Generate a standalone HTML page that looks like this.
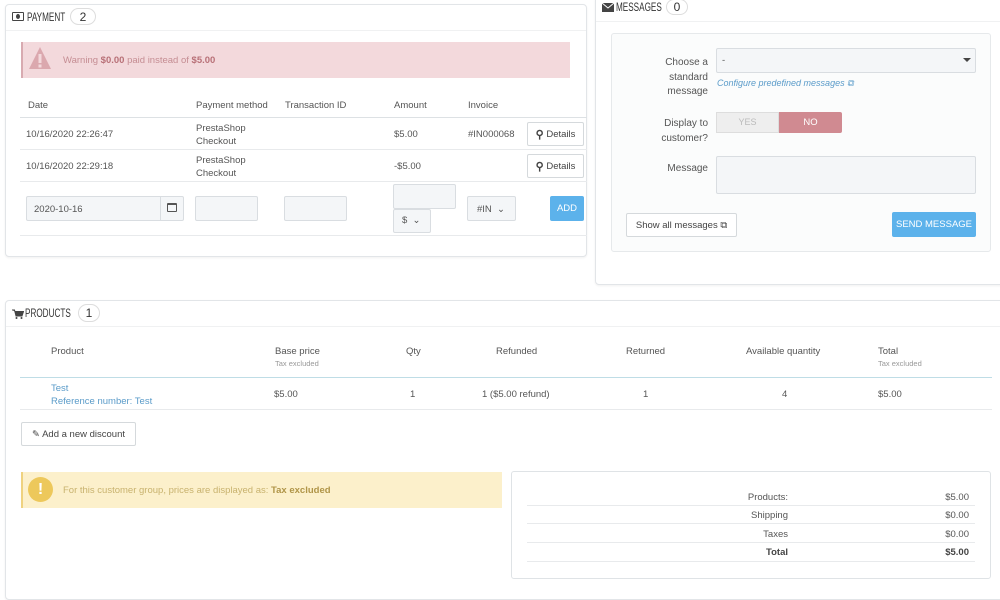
<!DOCTYPE html><html><head><style>
*{box-sizing:border-box;margin:0;padding:0}
body{width:1000px;height:590px;background:#fff;font-family:"Liberation Sans",sans-serif;font-size:9.5px;color:#555;position:relative;overflow:hidden}
.a{position:absolute}
.panel{position:absolute;border:1px solid #e2e5e8;border-radius:4px;background:#fff;box-shadow:0 1px 2px rgba(0,0,0,.06)}
.hd{font-size:12px;color:#333;text-transform:uppercase;transform:scaleX(.68);transform-origin:left;white-space:nowrap}
.badge{position:absolute;border:1px solid #ddd;border-radius:9px;font-size:12px;color:#333;display:flex;align-items:center;justify-content:center}
.line{position:absolute;height:1px;background:#e8eaec}
.inp{position:absolute;background:#f4f6f8;border:1px solid #d9dde1;border-radius:2px}
.btn{position:absolute;border:1px solid #d5d9dc;border-radius:2px;background:#fff;color:#444;font-size:9.5px;display:flex;align-items:center;justify-content:center}
.blue{background:#5cb2eb;color:#fff;border:none}
.r{text-align:right}
</style></head><body>
<!-- PAYMENT -->
<div class="panel" style="left:5px;top:4px;width:582px;height:253px"></div>
<div class="a" style="left:12px;top:12px;width:12px;height:9px;border:1.5px solid #444;border-radius:1px"></div>
<div class="a" style="left:16px;top:14px;width:4px;height:5px;border-radius:50%;background:#444"></div>
<div class="a hd" style="left:27px;top:10px">Payment</div>
<div class="badge" style="left:70px;top:8px;width:26px;height:17px">2</div>
<div class="line" style="left:6px;top:30px;width:580px;background:#f0f1f2"></div>
<div class="a" style="left:21px;top:42px;width:549px;height:36px;background:#f3d9dc;border-left:2px solid #d8aab0"></div>
<svg class="a" style="left:28px;top:44px" width="24" height="28" viewBox="0 0 24 28"><path d="M12 3 L23 25 H1 Z" fill="#dba8ae"/><rect x="10.5" y="10" width="3" height="9" fill="#f3d9dc"/><rect x="10.5" y="20.5" width="3" height="3" fill="#f3d9dc"/></svg>
<div class="a" style="left:63px;top:55px;color:#c58d93">Warning <b style="color:#b87077">$0.00</b> paid instead of <b style="color:#b87077">$5.00</b></div>
<div class="a" style="left:28px;top:100px">Date</div>
<div class="a" style="left:196px;top:100px">Payment method</div>
<div class="a" style="left:285px;top:100px">Transaction ID</div>
<div class="a" style="left:394px;top:100px">Amount</div>
<div class="a" style="left:468px;top:100px">Invoice</div>
<div class="line" style="left:20px;top:117px;width:567px;background:#dde1e4"></div>
<div class="a" style="left:26px;top:129px">10/16/2020 22:26:47</div>
<div class="a" style="left:196px;top:122px;line-height:13px">PrestaShop<br>Checkout</div>
<div class="a" style="left:394px;top:129px">$5.00</div>
<div class="a" style="left:468px;top:129px">#IN000068</div>
<div class="btn" style="left:527px;top:122px;width:57px;height:24px"><b style="font-size:11px">&#9906;</b>&nbsp;Details</div>
<div class="line" style="left:20px;top:149px;width:567px"></div>
<div class="a" style="left:26px;top:161px">10/16/2020 22:29:18</div>
<div class="a" style="left:196px;top:154px;line-height:13px">PrestaShop<br>Checkout</div>
<div class="a" style="left:394px;top:161px">-$5.00</div>
<div class="btn" style="left:527px;top:154px;width:57px;height:24px"><b style="font-size:11px">&#9906;</b>&nbsp;Details</div>
<div class="line" style="left:20px;top:181px;width:567px"></div>
<div class="inp" style="left:26px;top:196px;width:158px;height:25px"></div>
<div class="a" style="left:160px;top:196px;width:1px;height:25px;background:#d9dde1"></div>
<div class="a" style="left:34px;top:204px">2020-10-16</div>
<div class="a" style="left:167px;top:203px;width:10px;height:9px;border:1.5px solid #555;border-top-width:2.5px;border-radius:1px"></div>
<div class="inp" style="left:195px;top:196px;width:63px;height:25px"></div>
<div class="inp" style="left:284px;top:196px;width:63px;height:25px"></div>
<div class="inp" style="left:393px;top:184px;width:63px;height:25px"></div>
<div class="inp" style="left:393px;top:209px;width:38px;height:24px"></div>
<div class="a" style="left:402px;top:215px">$ &nbsp;&#8964;</div>
<div class="inp" style="left:467px;top:196px;width:49px;height:25px"></div>
<div class="a" style="left:477px;top:204px">#IN &nbsp;&#8964;</div>
<div class="btn blue" style="left:550px;top:196px;width:34px;height:25px">ADD</div>
<div class="line" style="left:20px;top:235px;width:567px"></div>
<!-- MESSAGES -->
<div class="panel" style="left:595px;top:-5px;width:410px;height:290px"></div>
<svg class="a" style="left:602px;top:3px" width="12" height="9" viewBox="0 0 12 9"><rect width="12" height="9" fill="#444"/><path d="M0 0 L6 5 L12 0" stroke="#fff" fill="none"/></svg>
<div class="a hd" style="left:616px;top:0px">Messages</div>
<div class="badge" style="left:666px;top:-1px;width:22px;height:16px">0</div>
<div class="line" style="left:596px;top:21px;width:404px;background:#f0f1f2"></div>
<div class="a" style="left:611px;top:33px;width:380px;height:219px;border:1px solid #e6e9eb;border-radius:3px;background:#fbfcfc"></div>
<div class="a r" style="left:630px;top:56px;width:78px;line-height:14.5px;font-size:10px">Choose a<br>standard<br>message</div>
<div class="inp" style="left:716px;top:48px;width:260px;height:25px"></div>
<div class="a" style="left:722px;top:55px">-</div>
<div class="a" style="left:963px;top:58px;border:4px solid transparent;border-top-color:#444"></div>
<div class="a" style="left:717px;top:78px;color:#5a9bc9;font-style:italic;font-size:9px">Configure predefined messages &#10697;</div>
<div class="a r" style="left:630px;top:117px;width:78px;line-height:14.5px;font-size:10px">Display to<br>customer?</div>
<div class="a" style="left:716px;top:112px;width:63px;height:21px;background:#eee;border:1px solid #ddd;color:#bbb;text-align:center;line-height:19px;font-size:9px">YES</div>
<div class="a" style="left:779px;top:112px;width:63px;height:21px;background:#d08a91;border-radius:0 2px 2px 0;color:#fff;text-align:center;line-height:21px;font-size:9.5px">NO</div>
<div class="a r" style="left:630px;top:163px;width:78px;font-size:10px">Message</div>
<div class="inp" style="left:716px;top:156px;width:260px;height:38px"></div>
<div class="btn" style="left:626px;top:213px;width:111px;height:24px">Show all messages &#10697;</div>
<div class="btn blue" style="left:892px;top:212px;width:84px;height:25px">SEND MESSAGE</div>
<!-- PRODUCTS -->
<div class="panel" style="left:5px;top:300px;width:1000px;height:300px"></div>
<svg class="a" style="left:12px;top:309px" width="12" height="10" viewBox="0 0 12 10"><path d="M0 1 H2.5 L4 7 H10 L11.5 2.5 H3" fill="#444" stroke="#444"/><circle cx="4.5" cy="9" r="1" fill="#444"/><circle cx="9.5" cy="9" r="1" fill="#444"/></svg>
<div class="a hd" style="left:25px;top:306px">Products</div>
<div class="badge" style="left:78px;top:304px;width:22px;height:18px">1</div>
<div class="line" style="left:6px;top:326px;width:994px;background:#f0f1f2"></div>
<div class="a" style="left:51px;top:346px">Product</div>
<div class="a" style="left:275px;top:346px">Base price<br><span style="font-size:7.5px;color:#999;line-height:14px">Tax excluded</span></div>
<div class="a" style="left:406px;top:346px">Qty</div>
<div class="a" style="left:496px;top:346px">Refunded</div>
<div class="a" style="left:626px;top:346px">Returned</div>
<div class="a" style="left:746px;top:346px">Available quantity</div>
<div class="a" style="left:878px;top:346px">Total<br><span style="font-size:7.5px;color:#999;line-height:14px">Tax excluded</span></div>
<div class="line" style="left:20px;top:377px;width:972px;background:#bfdde6"></div>
<div class="a" style="left:51px;top:382px;color:#5a9bc9;line-height:13px">Test<br>Reference number: Test</div>
<div class="a" style="left:274px;top:389px">$5.00</div>
<div class="a" style="left:410px;top:389px">1</div>
<div class="a" style="left:482px;top:389px">1 ($5.00 refund)</div>
<div class="a" style="left:643px;top:389px">1</div>
<div class="a" style="left:782px;top:389px">4</div>
<div class="a" style="left:878px;top:389px">$5.00</div>
<div class="line" style="left:20px;top:409px;width:972px"></div>
<div class="btn" style="left:21px;top:422px;width:115px;height:24px">&#9998; Add a new discount</div>
<div class="a" style="left:21px;top:472px;width:481px;height:36px;background:#fcf0cb;border-left:2px solid #efd27f"></div>
<div class="a" style="left:28px;top:477px;width:25px;height:25px;border-radius:50%;background:#edc85b;color:#fff;font-weight:bold;text-align:center;line-height:25px;font-size:16px">!</div>
<div class="a" style="left:63px;top:485px;color:#c8b26e">For this customer group, prices are displayed as: <b style="color:#b09548">Tax excluded</b></div>
<div class="a" style="left:511px;top:471px;width:480px;height:108px;border:1px solid #dfe3e6;border-radius:3px"></div>
<div class="a r" style="left:680px;top:492px;width:108px">Products:</div><div class="a r" style="left:900px;top:492px;width:69px">$5.00</div>
<div class="line" style="left:527px;top:505px;width:448px"></div>
<div class="a r" style="left:680px;top:510px;width:108px">Shipping</div><div class="a r" style="left:900px;top:510px;width:69px">$0.00</div>
<div class="line" style="left:527px;top:523px;width:448px"></div>
<div class="a r" style="left:680px;top:529px;width:108px">Taxes</div><div class="a r" style="left:900px;top:529px;width:69px">$0.00</div>
<div class="line" style="left:527px;top:542px;width:448px"></div>
<div class="a r" style="left:680px;top:547px;width:108px;font-weight:bold;color:#444">Total</div><div class="a r" style="left:900px;top:547px;width:69px;font-weight:bold;color:#444">$5.00</div>
<div class="line" style="left:527px;top:561px;width:448px"></div>
</body></html>
